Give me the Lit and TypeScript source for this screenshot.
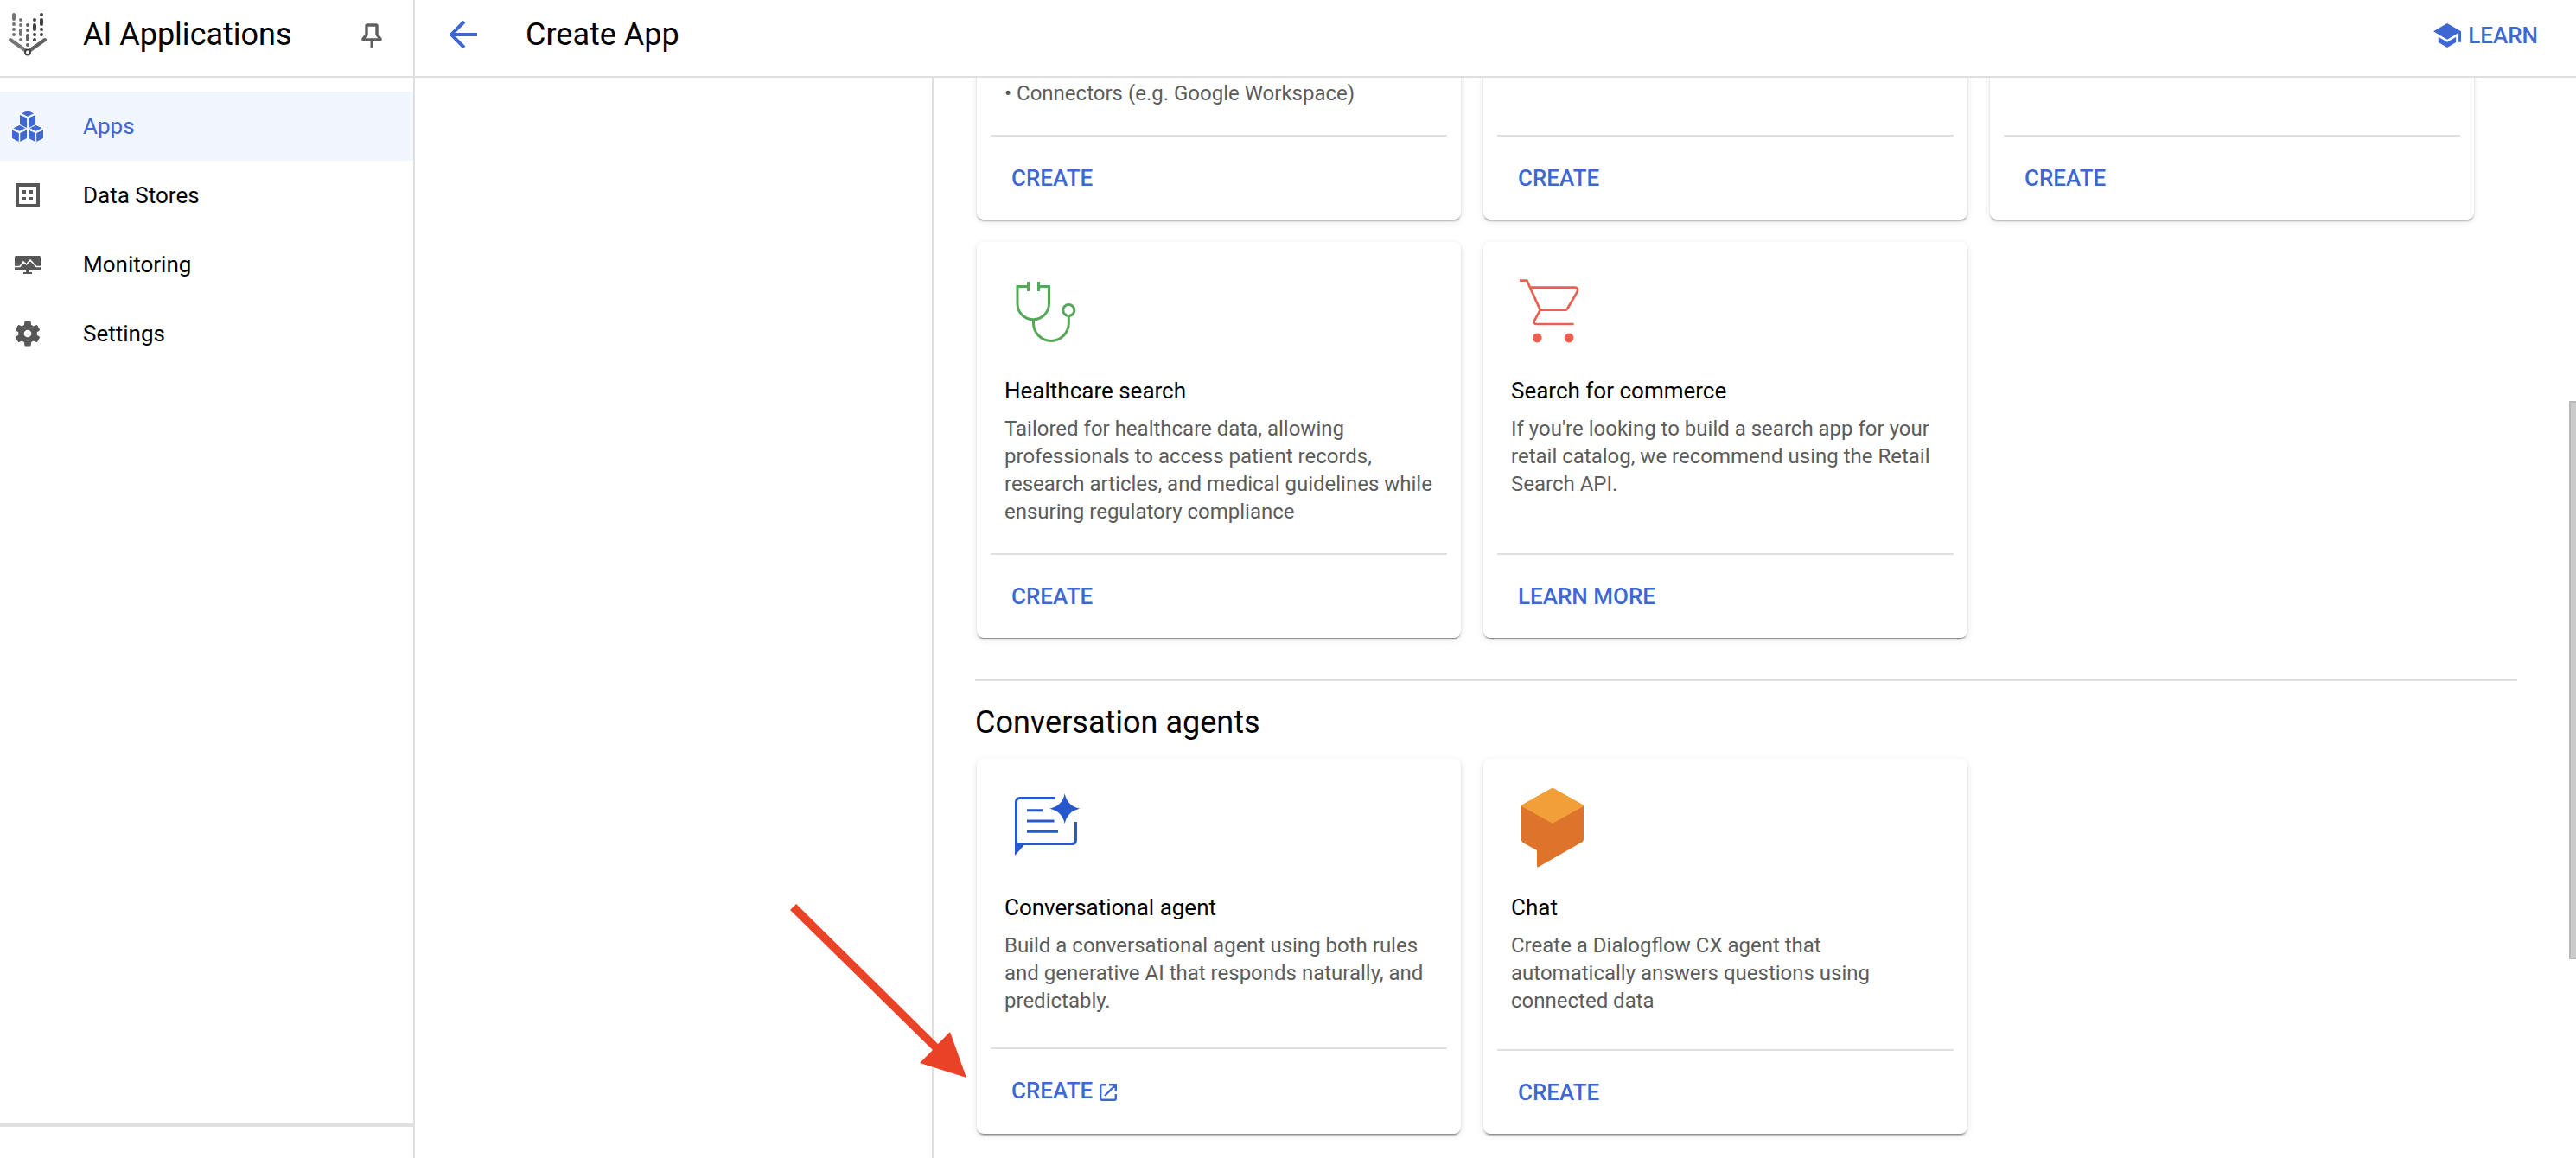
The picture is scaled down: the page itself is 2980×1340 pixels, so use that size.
import { LitElement, html, css, svg, nothing } from "lit";
import { customElement, property } from "lit/decorators.js";

const icons: Record<string, unknown> = {
  logo: svg`<svg viewBox="0 4 48 56" width="48" height="56" fill="none" stroke-linecap="round">
    <g stroke="#757575" stroke-width="4"><path d="M8 9v5M8 20v0M8 26v0M8 32v0"/><path d="M16 15v0M16 21v0M16 27v5M16 38v0"/></g>
    <g stroke="#616161" stroke-width="4"><path d="M24 21v0M24 27v0M24 33v5M24 44v0"/></g>
    <g stroke="#424242" stroke-width="4"><path d="M32 15v0M32 21v5M32 32v0M32 38v0"/><path d="M40 9v0M40 15v5M40 26v0M40 32v0"/></g>
    <path d="M4 38l17 12" stroke="#757575" stroke-width="4"/><path d="M44 38l-17 12" stroke="#616161" stroke-width="4"/>
    <circle cx="24" cy="52.5" r="3" stroke="#424242" stroke-width="2" fill="#fff"/></svg>`,
  pin: svg`<svg viewBox="0 0 24 32" width="24" height="32" fill="none" stroke="#5f5f5f" stroke-linejoin="round">
    <path d="M7 5h10q1 0 1 1v10l4 5v1H2v-1l4-5V6q0-1 1-1z" stroke-width="3.4"/><path d="M12 22v8" stroke-width="3" stroke-linecap="round"/></svg>`,
  back: svg`<svg viewBox="0 0 32 32" width="32" height="32" fill="none" stroke="#3f67d2" stroke-width="4"><path d="M32 16H3M17 1L2 16l15 15"/></svg>`,
  learn: svg`<svg viewBox="1 3 22 18" width="32" height="28" preserveAspectRatio="none" fill="#3f67d2"><path d="M12 3L1 9l11 6 9-4.91V17h2V9L12 3zM5 13.18v4L12 21l7-3.82v-4L12 17l-7-3.82z"/></svg>`,
  apps: svg`<svg viewBox="0 0 36 36" width="36" height="36" fill="#3f67d2">
    <path d="M18 0l7 3.3-7 3.4-7-3.4zM9 5l8 3.5V20l-8-4zM27 5l-8 3.5V20l8-4z"/>
    <path d="M8.5 17l7 3.3-7 3.4-7-3.4zM0 22.5L7.8 26v10L0 32zM17 22.5L9.3 26v10l7.7-4z"/>
    <path d="M27.5 17l7 3.3-7 3.4-7-3.4zM19 22.5l7.7 3.5v10L19 32zM36 22.5L28.2 26v10l7.8-4z"/></svg>`,
  stores: svg`<svg viewBox="0 0 28 28" width="28" height="28"><path d="M2 2h24v24H2z" fill="none" stroke="#575757" stroke-width="4"/><path d="M8 8h4v4H8zM16 8h4v4h-4zM8 16h4v4H8zM16 16h4v4h-4z" fill="#575757"/></svg>`,
  monitoring: svg`<svg viewBox="0 0 30 22" width="30" height="22"><path d="M1 1h28l1 1v15l-1 1H17v2h3v2H10v-2h3v-2H1l-1-1V2z" fill="#575757"/><path d="M0 13.500h6l4-5.500 3.500 3 4.500-5 7 7.500h5" fill="none" stroke="#fff" stroke-width="1.600"/></svg>`,
  settings: svg`<svg viewBox="2 2 20 20" width="30" height="30" fill="#575757"><path d="M19.14 12.94c.04-.3.06-.61.06-.94 0-.32-.02-.64-.07-.94l2.03-1.58a.49.49 0 0 0 .12-.61l-1.92-3.32a.49.49 0 0 0-.59-.22l-2.39.96a7 7 0 0 0-1.62-.94l-.36-2.54a.48.48 0 0 0-.48-.41h-3.84a.48.48 0 0 0-.47.41l-.36 2.54c-.59.24-1.13.57-1.62.94l-2.39-.96a.48.48 0 0 0-.59.22L2.74 8.87a.48.48 0 0 0 .12.61l2.03 1.58a7.4 7.4 0 0 0 0 1.88l-2.03 1.58a.49.49 0 0 0-.12.61l1.92 3.32c.12.22.37.29.59.22l2.39-.96c.5.38 1.03.7 1.62.94l.36 2.54c.05.24.24.41.48.41h3.84c.24 0 .44-.17.47-.41l.36-2.54c.59-.24 1.13-.56 1.62-.94l2.39.96c.22.08.47 0 .59-.22l1.92-3.32a.48.48 0 0 0-.12-.61zM12 14.9A2.9 2.9 0 1 1 12 9.1a2.9 2.9 0 0 1 0 5.8z"/></svg>`,
  health: svg`<svg viewBox="0 0 96 96" width="96" height="96" fill="none" stroke="#57a75b" stroke-width="3">
    <path d="M27.5 14v11M39.5 14v11M27.5 19.5H15v20a18.2 18.2 0 0 0 36.5 0v-20h-12"/><path d="M33.5 58v4a20.4 20.4 0 0 0 40.8 0v-8"/><circle cx="74.3" cy="47" r="6.5"/></svg>`,
  cart: svg`<svg viewBox="0 0 96 96" width="96" height="96" fill="none" stroke="#ec5f50" stroke-width="2.7">
    <path d="M10 12.7h8.4L33.8 46.7h28q3 0 4-2.5L76.500 26q2-5.3-2.5-5.3H22"/><path d="M33.8 46.7L27 59q-1.5 4 3 4h42.6"/><g fill="#ec5f50" stroke="none"><circle cx="30.3" cy="79" r="5.4"/><circle cx="67.1" cy="79" r="5.4"/></g></svg>`,
  agent: svg`<svg viewBox="0 0 96 96" width="96" height="96">
    <g fill="none" stroke="#2757cc" stroke-width="3"><path d="M58.6 13.5H18q-4.5 0-4.5 4.5v48.5H78q4.5 0 4.5-4.5V41"/><path d="M26 27.7h18M26 40h31.5M26 52.3h36"/></g>
    <path d="M12 66h12.5L12 80zM69.7 8.2q3 14.5 17.5 17.5-14.5 3-17.5 17.5-3-14.5-17.5-17.5 14.500-3 17.5-17.5z" fill="#2757cc"/></svg>`,
  chat: svg`<svg viewBox="0 0 96 96" width="96" height="96"><path d="M12 22.5v39.5q0 2 2 3.2L30 74v18q0 2 2 1l50-28.5q2-1.2 2-3.2V22.5z" fill="#de732c"/><path d="M46.5 2.2q1.5-1 3 0L83 21q2 1.300 0 2.5L48 42.7 13 23.5q-2-1.2 0-2.5z" fill="#f19f38"/></svg>`,
  open: svg`<svg viewBox="0 0 20 20" width="20" height="20" fill="none" stroke="#3f67d2" stroke-width="2.4"><path d="M8 1.2H3Q1.2 1.2 1.2 3v14q0 1.8 1.8 1.8h14q1.8 0 1.8-1.8v-5M11 1.2h7.8V9M18.5 1.5L6 14"/></svg>`,
};

const icon = (name: string) => icons[name];

@customElement("app-card")
class AppCard extends LitElement {
  @property() icon = "";
  @property() heading = "";
  @property() text = "";
  @property() action = "CREATE";
  @property({ type: Boolean }) external = false;

  static styles = css`
    :host { display: flex; flex-direction: column; box-sizing: border-box; padding: 0 16px 24px; border-radius: 8px; background: #fff;
      box-shadow: 0 3px 2px -2px rgba(0,0,0,.4), 0 2px 2px rgba(0,0,0,.14), 0 2px 8px rgba(0,0,0,.1); }
    :host([external]) { padding-bottom: 26px; }
    .body { flex: 1; padding: 32px 16px 0; }
    .icon { display: block; height: 96px; }
    .icon svg { display: block; overflow: visible; }
    h3 { margin: 24px 0 0; font-size: 26px; line-height: 40px; font-weight: 400; color: #000; }
    p { margin: 8px 0 32px; font-size: 24px; line-height: 32px; color: #5c5c5c; }
    .actions { border-top: 2px solid #e0e0e0; padding-top: 24px; }
    button { display: flex; align-items: center; gap: 8px; height: 48px; padding: 0 24px; border: 0; background: none; font: 500 26px/48px Roboto, sans-serif; color: #3f67d2; }
    button svg { display: block; margin-top: 4px; }
  `;

  render() {
    return html`
      <div class="body">
        <span class="icon">${icon(this.icon)}</span>
        ${this.heading ? html`<h3>${this.heading}</h3>` : nothing}
        <p>${this.text}</p>
      </div>
      <div class="actions"><button>${this.action}${this.external ? icon("open") : nothing}</button></div>`;
  }
}

@customElement("app-root")
class AppRoot extends LitElement {
  static styles = css`
    :host { display: grid; grid-template-columns: 480px minmax(0, 1fr); height: 100vh; overflow: hidden; background: #fff; color: #000; font-family: Roboto, sans-serif; position: relative; }
    * { box-sizing: border-box; }
    svg { display: block; }
    button { border: 0; padding: 0; background: none; font-family: inherit; }
    .side, .main { display: flex; flex-direction: column; min-height: 0; }
    .side { border-right: 2px solid #e0e0e0; }
    .bar { flex: none; display: flex; align-items: center; height: 90px; padding-bottom: 8px; border-bottom: 2px solid #e0e0e0; }
    .side .bar { padding-left: 8px; padding-right: 36px; gap: 40px; }
    .bar h1, .bar h2 { flex: 1; margin: 0; font-size: 36px; line-height: 48px; font-weight: 400; }
    nav { flex: 1; padding-top: 16px; }
    nav a { display: flex; align-items: center; height: 80px; gap: 40px; padding-left: 8px; font-size: 26px; color: #000; text-decoration: none; }
    nav a.active { background: #f0f5fe; color: #3f67d2; }
    .slot { display: flex; justify-content: center; width: 48px; }
    .foot { height: 40px; border-top: 4px solid #e0e0e0; }
    .main .bar { padding-left: 40px; padding-right: 44px; gap: 56px; }
    .learn { display: flex; align-items: center; gap: 8px; padding-top: 2px; font-size: 26px; font-weight: 500; color: #3f67d2; text-decoration: none; }
    .columns { flex: 1; display: grid; grid-template-columns: 600px minmax(0, 1fr); min-height: 0; }
    .steps { border-right: 2px solid #e0e0e0; }
    .content { display: flex; flex-direction: column; justify-content: flex-end; padding: 0 68px 28px 48px; overflow: hidden; }
    .cards { display: grid; grid-template-columns: repeat(3, 560px); gap: 26px; padding-left: 2px; }
    .agents app-card { min-height: 434px; }
    hr { width: 100%; margin: 48px 0 28px; border: 0; border-top: 2px solid #e0e0e0; }
    .content h2 { margin: 0 0 22px; font-size: 36px; line-height: 40px; font-weight: 400; }
    .thumb { position: absolute; right: 0; top: 464px; width: 8px; height: 646px; background: #cbcbcb; border: 2px solid #b8b8b8; border-right: 0; }
    .pointer { position: absolute; left: 912px; top: 1044px; pointer-events: none; }
  `;

  private nav = [
    ["apps", "Apps"],
    ["stores", "Data Stores"],
    ["monitoring", "Monitoring"],
    ["settings", "Settings"],
  ];

  render() {
    return html`
      <aside class="side">
        <div class="bar">${icon("logo")}<h1>AI Applications</h1><button aria-label="Pin">${icon("pin")}</button></div>
        <nav>${this.nav.map(([key, label], i) => html`<a href="#${key}" class=${i === 0 ? "active" : ""}><span class="slot">${icon(key)}</span>${label}</a>`)}</nav>
        <div class="foot"></div>
      </aside>
      <section class="main">
        <header class="bar">
          <button aria-label="Back">${icon("back")}</button>
          <h2>Create App</h2>
          <a class="learn" href="#learn">${icon("learn")}LEARN</a>
        </header>
        <div class="columns">
          <div class="steps"></div>
          <main class="content">
            <div class="cards">
              <app-card text="• Connectors (e.g. Google Workspace)"></app-card>
              <app-card></app-card>
              <app-card></app-card>
              <app-card icon="health" heading="Healthcare search" text="Tailored for healthcare data, allowing professionals to access patient records, research articles, and medical guidelines while ensuring regulatory compliance"></app-card>
              <app-card icon="cart" heading="Search for commerce" text="If you're looking to build a search app for your retail catalog, we recommend using the Retail Search API." action="LEARN MORE"></app-card>
            </div>
            <hr />
            <h2>Conversation agents</h2>
            <div class="cards agents">
              <app-card icon="agent" heading="Conversational agent" text="Build a conversational agent using both rules and generative AI that responds naturally, and predictably." external></app-card>
              <app-card icon="chat" heading="Chat" text="Create a Dialogflow CX agent that automatically answers questions using connected data"></app-card>
            </div>
          </main>
        </div>
      </section>
      <div class="thumb"></div>
      <svg class="pointer" viewBox="0 0 208 206" width="208" height="206"><path d="M9 2L2 9 167 171 152 186 206 203 187 150 173 164z" fill="#ea4227"/></svg>
    `;
  }
}
